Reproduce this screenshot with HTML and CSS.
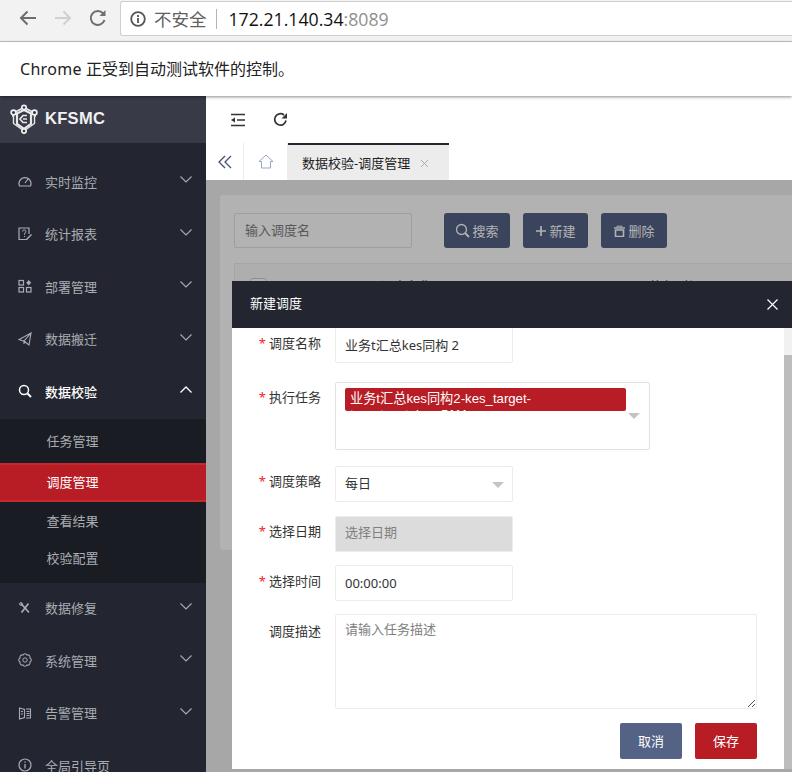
FILE: index.html
```html
<!DOCTYPE html>
<html lang="zh">
<head>
<meta charset="utf-8">
<title>KFSMC</title>
<link rel="stylesheet" href="styles.css">
</head>
<body>
<header class="browser">
  <svg class="nav-ic" width="22" height="22" viewBox="0 0 22 22"><path d="M19 11H4M10.500 4.500L4 11l6.500 6.500" fill="none" stroke="#6e6e6e" stroke-width="2"/></svg>
  <svg class="nav-ic" width="22" height="22" viewBox="0 0 22 22"><path d="M3 11h15M11.500 4.500L18 11l-6.500 6.500" fill="none" stroke="#d0d0d0" stroke-width="2"/></svg>
  <svg class="nav-ic" width="22" height="22" viewBox="0 0 22 22"><path d="M17.500 13a7 7 0 1 1-1.300-6.500" fill="none" stroke="#6e6e6e" stroke-width="2"/><path d="M18.500 3v6h-6z" fill="#6e6e6e"/></svg>
  <div class="omnibox">
    <svg width="16" height="16" viewBox="0 0 16 16"><circle cx="8" cy="8" r="6.800" fill="none" stroke="#555" stroke-width="1.800"/><path d="M8 7v5M8 4v2" stroke="#555" stroke-width="1.800"/></svg>
    <span class="insecure">不安全</span>
    <span class="omni-sep"></span>
    <span class="url">172.21.140.34<span class="port">:8089</span></span>
  </div>
</header>
<div class="infobar"><span class="info-app">Chrome</span> 正受到自动测试软件的控制。</div>
<div class="app">
  <aside class="sidebar">
    <div class="brand">
      <svg width="28" height="30" viewBox="0 0 28 30"><path d="M14 3.500L25 9v4M14 3.500L3 9v4" fill="none" stroke="#e8e8e8" stroke-width="1.600"/><path d="M7 9.500L14 6l7 3.500v10.500L14 25l-7-5z" fill="none" stroke="#e8e8e8" stroke-width="2.200"/><path d="M3.500 11v8.500L14 27l10.500-7.500V11" fill="none" stroke="#e8e8e8" stroke-width="1.400"/><path d="M17 11.500h-4l-3 3.500 3 3.500h4M13 15h4" fill="none" stroke="#e8e8e8" stroke-width="1.700"/><g fill="#383b47" stroke="#efefef" stroke-width="1.700"><circle cx="14" cy="3.500" r="2.200"/><circle cx="3.500" cy="8.500" r="2.400"/><circle cx="24.500" cy="8.500" r="2.400"/><circle cx="14" cy="27" r="2.200"/></g></svg>
      <span class="brand-name">KFSMC</span>
    </div>
    <nav class="menu">
      <div class="menu-item">
        <svg class="mi" width="14" height="14" viewBox="0 0 14 14"><path d="M1.500 12a6 6 0 1 1 11 0zM7 9l3-4" fill="none" stroke="#a9adb3" stroke-width="1.200"/></svg>
        <span>实时监控</span>
        <svg class="chev" width="12" height="7" viewBox="0 0 12 7"><path d="M.5.500L6 6 11.500.500" fill="none" stroke="#a9adb3" stroke-width="1.100"/></svg>
      </div>
      <div class="menu-item">
        <svg class="mi" width="14" height="14" viewBox="0 0 14 14"><path d="M9 12.500H1V1h10v6" fill="none" stroke="#a9adb3" stroke-width="1.200"/><path d="M4.500 4.500a1.700 1.700 0 1 1 2 1.800v1.500M6.500 9v1" fill="none" stroke="#a9adb3"/><path d="M8 12l5-5 1 1-5 5z" fill="#a9adb3"/></svg>
        <span>统计报表</span>
        <svg class="chev" width="12" height="7" viewBox="0 0 12 7"><path d="M.5.500L6 6 11.500.500" fill="none" stroke="#a9adb3" stroke-width="1.100"/></svg>
      </div>
      <div class="menu-item">
        <svg class="mi" width="14" height="14" viewBox="0 0 14 14"><g fill="none" stroke="#a9adb3" stroke-width="1.200"><rect x="1" y="1.500" width="4.500" height="4.500"/><rect x="1" y="8.500" width="4.500" height="4.500"/><rect x="8.500" y="8.500" width="4.500" height="4.500"/></g><path d="M10.700 1l2.500 2.700-2.500 2.700-2.500-2.700z" fill="#a9adb3"/></svg>
        <span>部署管理</span>
        <svg class="chev" width="12" height="7" viewBox="0 0 12 7"><path d="M.5.500L6 6 11.500.500" fill="none" stroke="#a9adb3" stroke-width="1.100"/></svg>
      </div>
      <div class="menu-item">
        <svg class="mi" width="14" height="14" viewBox="0 0 14 14"><path d="M13 1L1 7.500l4 1.500 1 0L13 1l-2 12-5-4v3" fill="none" stroke="#a9adb3" stroke-width="1.100"/></svg>
        <span>数据搬迁</span>
        <svg class="chev" width="12" height="7" viewBox="0 0 12 7"><path d="M.5.500L6 6 11.500.500" fill="none" stroke="#a9adb3" stroke-width="1.100"/></svg>
      </div>
      <div class="menu-item open">
        <svg class="mi" width="14" height="14" viewBox="0 0 14 14"><circle cx="6" cy="6" r="4.500" fill="none" stroke="#fff" stroke-width="1.500"/><path d="M9.500 9.500l3.500 3.500" stroke="#fff" stroke-width="2"/></svg>
        <span>数据校验</span>
        <svg class="chev" width="12" height="7" viewBox="0 0 12 7"><path d="M.5 6.500L6 1l5.500 5.500" fill="none" stroke="#fff" stroke-width="1.300"/></svg>
      </div>
      <div class="submenu">
        <div class="sub-item">任务管理</div>
        <div class="sub-item active">调度管理</div>
        <div class="sub-item">查看结果</div>
        <div class="sub-item sub-last">校验配置</div>
      </div>
      <div class="menu-item">
        <svg class="mi" width="14" height="14" viewBox="0 0 14 14"><path d="M3 2.500l8 9M10.500 2.500L3.500 11.500" fill="none" stroke="#a9adb3" stroke-width="1.700"/><circle cx="3" cy="3" r="1.400" fill="none" stroke="#a9adb3"/></svg>
        <span>数据修复</span>
        <svg class="chev" width="12" height="7" viewBox="0 0 12 7"><path d="M.5.500L6 6 11.500.500" fill="none" stroke="#a9adb3" stroke-width="1.100"/></svg>
      </div>
      <div class="menu-item">
        <svg class="mi" width="14" height="14" viewBox="0 0 14 14"><path d="M11.900 4.970A2.200 2.200 0 0 1 11.900 9.030A2.200 2.200 0 0 1 9.030 11.900A2.200 2.200 0 0 1 4.970 11.900A2.200 2.200 0 0 1 2.100 9.030A2.200 2.200 0 0 1 2.100 4.970A2.200 2.200 0 0 1 4.970 2.100A2.200 2.200 0 0 1 9.030 2.100A2.200 2.200 0 0 1 11.900 4.970z" fill="none" stroke="#a9adb3" stroke-width="1.100"/><circle cx="7" cy="7" r="2.200" fill="none" stroke="#a9adb3"/></svg>
        <span>系统管理</span>
        <svg class="chev" width="12" height="7" viewBox="0 0 12 7"><path d="M.5.500L6 6 11.500.500" fill="none" stroke="#a9adb3" stroke-width="1.100"/></svg>
      </div>
      <div class="menu-item">
        <svg class="mi" width="14" height="14" viewBox="0 0 14 14"><path d="M1.500 2l5 1.500v8l-5 1.500zM8 3h4.500v9H8M8.500 5.500h3M8.500 7.500h3M8.500 9.500h3M3 5.500h2M3 8h2" fill="none" stroke="#a9adb3" stroke-width="1.100"/></svg>
        <span>告警管理</span>
        <svg class="chev" width="12" height="7" viewBox="0 0 12 7"><path d="M.5.500L6 6 11.500.500" fill="none" stroke="#a9adb3" stroke-width="1.100"/></svg>
      </div>
      <div class="menu-item">
        <svg class="mi" width="14" height="14" viewBox="0 0 14 14"><circle cx="7" cy="7" r="6" fill="none" stroke="#a9adb3" stroke-width="1.200"/><path d="M7 6v4.500M7 3.500v1.300" stroke="#a9adb3" stroke-width="1.300"/></svg>
        <span>全局引导页</span>
      </div>
    </nav>
  </aside>
  <main class="main">
    <div class="toolbar">
      <svg width="16" height="14" viewBox="0 0 16 14"><path d="M1 1.500h14M7 7h8M1 12.500h14" stroke="#333" stroke-width="1.500" fill="none"/><path d="M1 7l4-2.500v5z" fill="#333"/></svg>
      <svg width="15" height="15" viewBox="0 0 15 15"><path d="M13 8.500A5.700 5.700 0 1 1 11 3" fill="none" stroke="#333" stroke-width="1.700"/><path d="M14 1v5.500H8.500z" fill="#333"/></svg>
    </div>
    <div class="tabs">
      <div class="tab-btn tab-back"><svg width="14" height="14" viewBox="0 0 14 14"><path d="M7 1L1 7l6 6M13 1L7 7l6 6" fill="none" stroke="#44516f" stroke-width="1.300"/></svg></div>
      <div class="tab-btn tab-home"><svg width="16" height="15" viewBox="0 0 16 15"><path d="M8 1L1 7.500h2.500V14h9V7.500H15z" fill="none" stroke="#9aa5c8"/></svg></div>
      <div class="tab-active">数据校验-调度管理<svg class="tab-x" width="9" height="9" viewBox="0 0 9 9"><path d="M1 1l7 7M8 1L1 8" stroke="#aaa" fill="none"/></svg></div>
    </div>
    <div class="content">
      <section class="panel">
        <div class="search-row">
          <div class="search-input">输入调度名</div>
          <div class="btn-group">
            <div class="pg-btn"><svg width="15" height="15" viewBox="0 0 15 15"><circle cx="6.500" cy="6.500" r="5" fill="none" stroke="#fff" stroke-width="1.300"/><path d="M10 10l4 4" stroke="#fff" stroke-width="1.800"/></svg>搜索</div>
            <div class="pg-btn pg-narrow"><svg width="12" height="12" viewBox="0 0 12 12"><path d="M6 1v10M1 6h10" stroke="#fff" stroke-width="1.700"/></svg>新建</div>
            <div class="pg-btn"><svg width="13" height="12" viewBox="0 0 13 12"><path d="M1 3h11" stroke="#fff" stroke-width="1.400"/><path d="M4 2.500V1.200h5V2.500" fill="none" stroke="#fff"/><path d="M2.500 5h8v6.500h-8z" fill="none" stroke="#fff" stroke-width="1.600"/></svg>删除</div>
          </div>
        </div>
        <div class="table-head">
          <span class="check"></span>
          <span class="th-a">调度名称</span>
          <span class="th-b">执行时间</span>
        </div>
      </section>
      <div class="overlay"></div>
      <div class="modal">
        <div class="modal-head">
          <span class="modal-title">新建调度</span>
          <svg class="modal-close" width="11" height="11" viewBox="0 0 11 11"><path d="M.5.500l10 10M10.500.500l-10 10" stroke="#fff" stroke-width="1.200" fill="none"/></svg>
        </div>
        <div class="modal-body">
          <form class="form">
            <div class="row row-name">
              <label class="lbl"><i>*</i>调度名称</label>
              <div class="field w178">业务t汇总kes同构 2</div>
            </div>
            <div class="row row-task">
              <label class="lbl"><i>*</i>执行任务</label>
              <div class="taskbox">
                <div class="tag">业务t汇总kes同构2-kes_target-target_catalog_5111</div>
                <span class="caret caret-task"></span>
              </div>
            </div>
            <div class="row row-plan">
              <label class="lbl"><i>*</i>调度策略</label>
              <div class="field w178 field-plan">每日<span class="caret caret-sel"></span></div>
            </div>
            <div class="row row-date">
              <label class="lbl"><i>*</i>选择日期</label>
              <div class="field w178 disabled">选择日期</div>
            </div>
            <div class="row row-time">
              <label class="lbl"><i>*</i>选择时间</label>
              <div class="field w178">00:00:00</div>
            </div>
            <div class="row row-desc">
              <label class="lbl">调度描述</label>
              <div class="textarea">请输入任务描述
                <svg class="grip" width="9" height="9" viewBox="0 0 9 9"><path d="M1 8l7-7M5 8l3-3" stroke="#555" fill="none"/></svg>
              </div>
            </div>
            <div class="actions">
              <div class="btn btn-cancel">取消</div>
              <div class="btn btn-save">保存</div>
            </div>
          </form>
          <div class="scroll"><div class="thumb"></div></div>
        </div>
      </div>
    </div>
  </main>
</div>
</body>
</html>
```
FILE: styles.css
```css
* { box-sizing: border-box; }
html, body { margin: 0; height: 772px; overflow: hidden; }
body { font-family: "Noto Sans", "Noto Sans CJK SC", sans-serif; font-size: 13px; color: #333; background: #fff; }

.browser { height: 42px; background: #f2f2f2; border-bottom: 1px solid #c4c4c4; display: flex; align-items: flex-start; padding: 7px 0 0 17px; gap: 13px; }
.nav-ic { flex: none; }
.omnibox { margin: -6px 0 0 -2px; width: 680px; height: 35px; background: #fff; border: 1px solid #cfcfcf; border-right: 0; border-radius: 3px 0 0 3px; display: flex; align-items: center; padding-left: 9px; }
.insecure { margin-left: 8px; font-size: 17.500px; color: #5f5f5f; }
.omni-sep { width: 1px; height: 20px; background: #b5b5b5; margin: 0 12px 0 9px; }
.url { font-size: 17.700px; color: #111; font-family: "Open Sans", "Noto Sans CJK SC", sans-serif; }
.port { color: #8f8f8f; }

.infobar { height: 54px; background: #fff; padding: 15px 0 0 20px; font-size: 16px; color: #222; line-height: 24px; position: relative; z-index: 3; box-shadow: 0 1px 3px rgba(0,0,0,.45); }
.info-app { letter-spacing: .3px; }

.app { display: flex; height: 676px; }
.sidebar { width: 206px; flex: none; background: #232630; overflow: hidden; }
.brand { height: 47px; background: #383b47; display: flex; align-items: center; padding: 0 0 1px 10px; gap: 7px; }
.brand-name { font: bold 16.500px "Liberation Sans", sans-serif; color: #f1f1f1; letter-spacing: .3px; margin-top: -2px; }
.menu { padding-top: 13px; }
.menu-item { height: 52.500px; display: flex; align-items: center; padding: 0 0 2px 18px; color: #a9adb3; position: relative; }
.menu-item span { margin-left: 13px; }
.mi { flex: none; }
.chev { position: absolute; left: 180px; top: 20px; }
.menu-item.open { color: #fff; font-weight: 500; }
.submenu { background: #1a1c23; height: 164px; padding-top: 3px; color: #a9adb3; }
.sub-item { height: 38px; line-height: 38px; padding-left: 46.500px; }
.sub-item:first-child { height: 41px; }
.sub-item.active { height: 39px; line-height: 34px; background: #b81c25; border: 2px solid #c5282f; border-width: 2px 0; color: #fff; }
.sub-last { line-height: 36px; }

.main { flex: 1; min-width: 0; display: flex; flex-direction: column; }
.toolbar { height: 47px; flex: none; background: #fff; display: flex; align-items: center; gap: 27px; padding-left: 24px; }
.tabs { height: 37px; flex: none; background: #fff; display: flex; }
.tab-btn { height: 37px; display: flex; align-items: center; justify-content: center; border-right: 1px solid #ececec; }
.tab-back { width: 38px; }
.tab-home { width: 44px; }
.tab-active { width: 161px; background: #ececec; border-top: 2px solid #232630; display: flex; align-items: center; padding-left: 14px; gap: 10px; color: #222; }
.tab-x { margin-top: 1px; }

.content { flex: 1; position: relative; background: #f0f0f0; padding: 15px 0 0 14px; overflow: hidden; }
.panel { height: 355px; background: #fff; border-radius: 3px 0 0 3px; padding: 18px 0 0 14px; }
.search-row { display: flex; }
.search-input { width: 178px; height: 35px; border: 1px solid #e2e2e2; border-radius: 2px; padding-left: 10px; line-height: 33px; color: #808080; }
.btn-group { display: flex; gap: 13px; margin-left: 32px; }
.pg-btn { width: 66px; height: 35px; background: #536285; border-radius: 3px; color: #fff; display: flex; align-items: center; justify-content: center; gap: 2px; }
.pg-narrow { width: 65px; }
.table-head { margin-top: 15px; height: 60px; background: #fafafa; border: 1px solid #eee; border-right: 0; position: relative; padding: 14px 0 0 15px; color: #555; display: flex; }
.check { width: 17px; height: 17px; border: 1px solid #ccc; border-radius: 3px; background: #fff; }
.th-a { margin: -2px 0 0 113px; }
.th-b { margin: -2px 0 0 218px; }

.overlay { position: absolute; inset: 0; background: rgba(0,0,0,.3); }
.modal { position: absolute; left: 26px; top: 101px; width: 560px; height: 488px; background: #fff; display: flex; flex-direction: column; }
.modal-head { height: 47px; flex: none; background: #232630; color: #fff; display: flex; align-items: center; justify-content: space-between; padding: 0 14px 0 18px; }
.modal-title { margin-top: -5px; }
.modal-body { flex: 1; display: flex; min-height: 0; overflow: hidden; }
.form { flex: 1; min-width: 0; }
.scroll { width: 8px; flex: none; background: #f1f1f1; padding-top: 27px; }
.thumb { height: 100%; background: #bdbdbd; }

.row { display: flex; }
.row-name { margin-top: -1px; }
.row-task { margin-top: 19px; }
.row-plan { margin-top: 16px; }
.row-date { margin-top: 14px; }
.row-time { margin-top: 13px; }
.row-desc { margin-top: 13px; }
.lbl { width: 89px; margin-right: 14px; text-align: right; padding-top: 5px; line-height: 20px; color: #333; flex: none; }
.row-name .lbl, .row-time .lbl { padding-top: 6px; }
.row-desc .lbl { padding-top: 7px; }
.lbl i { color: #f5222d; font-style: normal; margin-right: 3px; }
.field { height: 36px; border: 1px solid #ececec; border-radius: 2px; padding-left: 9px; line-height: 34px; color: #333; position: relative; }
.field-plan { line-height: 32px; }
.w178 { width: 178px; }
.disabled { background: #dcdcdc; color: #808080; line-height: 31px; }
.taskbox { width: 315px; height: 68px; border: 1px solid #e2e2e2; border-radius: 2px; position: relative; padding: 5px 0 0 9px; }
.tag { width: 281px; height: 23px; overflow: hidden; background: #b81c25; color: #fff; border-radius: 2px; padding: 3px 5px 0; line-height: 16px; font-family: "Liberation Sans", "Noto Sans CJK SC", sans-serif; font-size: 13.200px; }
.caret { position: absolute; width: 0; height: 0; border: 6px solid transparent; border-top: 6px solid #c4c4c4; border-bottom: 0; }
.caret-task { left: 292px; top: 30px; }
.caret-sel { left: 156px; top: 15px; }
.textarea { width: 422px; height: 95px; border: 1px solid #ececec; border-radius: 2px; padding: 4px 9px; line-height: 20px; color: #808080; position: relative; }
.grip { position: absolute; right: 0; bottom: 0; }
.actions { display: flex; justify-content: flex-end; gap: 13px; margin: 14px 27px 0 0; }
.btn { width: 62px; height: 36px; border-radius: 2px; color: #fff; line-height: 36px; text-align: center; }
.btn-cancel { background: #536285; }
.btn-save { background: #b81c25; }
```
